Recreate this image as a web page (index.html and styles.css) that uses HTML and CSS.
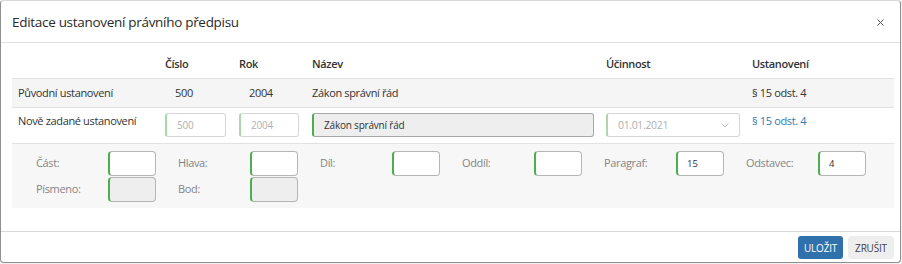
FILE: index.html
```html
<!DOCTYPE html>
<html>
<head>
    <title>Editace ustanovení</title>
    <link rel="stylesheet" href="styles.css">
</head>
<body>
    <div class="modal">
        <div class="modal-header">
            <h4 class="modal-title">Editace ustanovení právního předpisu</h4>
            <button class="close" type="button">
                <svg width="7" height="7" viewBox="0 0 7 7"><path d="M0.5 0.5L6.5 6.5M6.5 0.5L0.5 6.5" stroke="#555" stroke-width="1" fill="none"/></svg>
            </button>
        </div>

        <div class="modal-body">
            <table class="edit-table">
                <colgroup>
                    <col style="width: 147px">
                    <col style="width: 74px">
                    <col style="width: 73px">
                    <col style="width: 294px">
                    <col style="width: 146px">
                    <col>
                </colgroup>
                <thead>
                    <tr>
                        <th></th>
                        <th>Číslo</th>
                        <th>Rok</th>
                        <th>Název</th>
                        <th>Účinnost</th>
                        <th>Ustanovení</th>
                    </tr>
                </thead>
                <tbody>
                    <tr class="original">
                        <td>Původní ustanovení</td>
                        <td class="num">500</td>
                        <td class="num">2004</td>
                        <td>Zákon správní řád</td>
                        <td></td>
                        <td>§ 15 odst. 4</td>
                    </tr>
                    <tr class="new">
                        <td>Nově zadané ustanovení</td>
                        <td><input class="field valid w-cislo" type="text" placeholder="500"></td>
                        <td><input class="field valid w-rok" type="text" placeholder="2004"></td>
                        <td><input class="field readonly w-nazev" type="text" value="Zákon správní řád" readonly></td>
                        <td>
                            <div class="fake-select">
                                <span>01.01.2021</span>
                                <svg width="8" height="5" viewBox="0 0 8 5"><path d="M0.5 0.5L4 4L7.5 0.5" stroke="#bbb" stroke-width="1" fill="none"/></svg>
                            </div>
                        </td>
                        <td><a href="#" class="link">§ 15 odst. 4</a></td>
                    </tr>
                </tbody>
            </table>

            <div class="detail-panel">
                <div class="detail-row">
                    <div class="detail-item"><label>Část:</label><input class="box" type="text"></div>
                    <div class="detail-item"><label>Hlava:</label><input class="box" type="text"></div>
                    <div class="detail-item"><label>Díl:</label><input class="box" type="text"></div>
                    <div class="detail-item"><label>Oddíl:</label><input class="box" type="text"></div>
                    <div class="detail-item"><label>Paragraf:</label><input class="box" type="text" value="15"></div>
                    <div class="detail-item"><label>Odstavec:</label><input class="box" type="text" value="4"></div>
                </div>
                <div class="detail-row">
                    <div class="detail-item"><label>Písmeno:</label><input class="box disabled" type="text" disabled></div>
                    <div class="detail-item"><label>Bod:</label><input class="box disabled" type="text" disabled></div>
                </div>
            </div>
        </div>

        <div class="modal-footer">
            <button class="btn btn-primary" type="button">Uložit</button>
            <button class="btn btn-default" type="button">Zrušit</button>
        </div>
    </div>
</body>
</html>
```

FILE: styles.css
```css
body {
    margin: 0;
    background-color: #f2f2f2;
    font-family: "Open Sans", "Noto Sans", sans-serif;
    font-size: 11px;
    letter-spacing: -0.35px;
    color: #333;
}
.modal {
    width: 899px;
    height: 261px;
    background-color: #fff;
    border: 1px solid #8e8e8e;
    border-top-color: #d8d8d8;
    border-radius: 4px;
    display: flex;
    flex-direction: column;
}
.modal-header {
    display: flex;
    align-items: center;
    justify-content: space-between;
    padding: 13px 11px 11px 11px;
    border-bottom: 1px solid #e0e0e0;
}
.modal-title {
    margin: 0;
    font-size: 13.5px;
    line-height: 17px;
    font-weight: normal;
    letter-spacing: -0.3px;
    color: #2a2a2a;
}
.close {
    border: none;
    background: none;
    padding: 0;
    margin-right: 5px;
    display: flex;
    cursor: pointer;
}
.modal-body {
    flex: 1;
    padding: 7px 6px 0 11px;
}
.edit-table {
    width: 100%;
    border-collapse: collapse;
    table-layout: fixed;
}
.edit-table th,
.edit-table td {
    text-align: left;
    padding: 6px 6px;
    line-height: 16px;
    border-bottom: 1px solid #e2e2e2;
    white-space: nowrap;
}
.edit-table th {
    font-weight: 600;
}
.edit-table .original td {
    background-color: #f5f5f5;
}
.edit-table .original td.num {
    padding-left: 16px;
}
.edit-table .new td {
    vertical-align: top;
    padding-top: 5px;
    padding-bottom: 6px;
}
.field {
    box-sizing: border-box;
    display: block;
    height: 24px;
    padding: 0 10px;
    font-family: inherit;
    font-size: 10px;
    letter-spacing: -0.2px;
    color: #333;
    border: 1px solid #d6d6d6;
    border-radius: 3px;
    background-color: #fff;
}
.field::placeholder {
    color: #b0b0b0;
}
.field.valid {
    border-left: 2px solid #a9d8a9;
}
.field.readonly {
    background-color: #eeeeee;
    border-color: #a8a8a8;
    border-left: 2px solid #4cae4c;
}
.w-cislo {
    width: 61px;
}
.w-rok {
    width: 60px;
}
.w-nazev {
    width: 282px;
}
.fake-select {
    box-sizing: border-box;
    width: 134px;
    height: 24px;
    display: flex;
    align-items: center;
    justify-content: space-between;
    padding: 0 10px 0 10px;
    border: 1px solid #d6d6d6;
    border-left: 2px solid #a9d8a9;
    border-radius: 3px;
    color: #b0b0b0;
    font-size: 10.5px;
}
.link {
    color: #337ab7;
    text-decoration: none;
}
.detail-panel {
    background-color: #f7f7f7;
    padding: 7px 24px 6px 24px;
    display: flex;
    flex-direction: column;
    gap: 1px;
}
.detail-row {
    display: flex;
}
.detail-item {
    display: flex;
    align-items: flex-start;
    width: 142px;
    flex-shrink: 0;
}
.detail-item label {
    width: 72px;
    padding-top: 5px;
    line-height: 14px;
    color: #858585;
}
.box {
    box-sizing: border-box;
    width: 48px;
    height: 25px;
    padding: 0 9px;
    font-family: inherit;
    font-size: 9.5px;
    color: #333;
    background-color: #fff;
    border: 1px solid #b5b5b5;
    border-left: 2px solid #4cae4c;
    border-radius: 4px;
}
.box.disabled {
    background-color: #eeeeee;
}
.modal-footer {
    display: flex;
    justify-content: flex-end;
    gap: 5px;
    padding: 4px 6px 3px 0;
    border-top: 1px solid #d8d8d8;
}
.btn {
    height: 23px;
    padding: 0 6px;
    font-family: inherit;
    font-size: 10px;
    letter-spacing: -0.2px;
    text-transform: uppercase;
    border: none;
    border-radius: 3px;
    cursor: pointer;
}
.btn-primary {
    background-color: #3071ab;
    color: #fff;
    width: 45px;
}
.btn-default {
    background-color: #eeeeee;
    color: #444;
    width: 46px;
}
```
